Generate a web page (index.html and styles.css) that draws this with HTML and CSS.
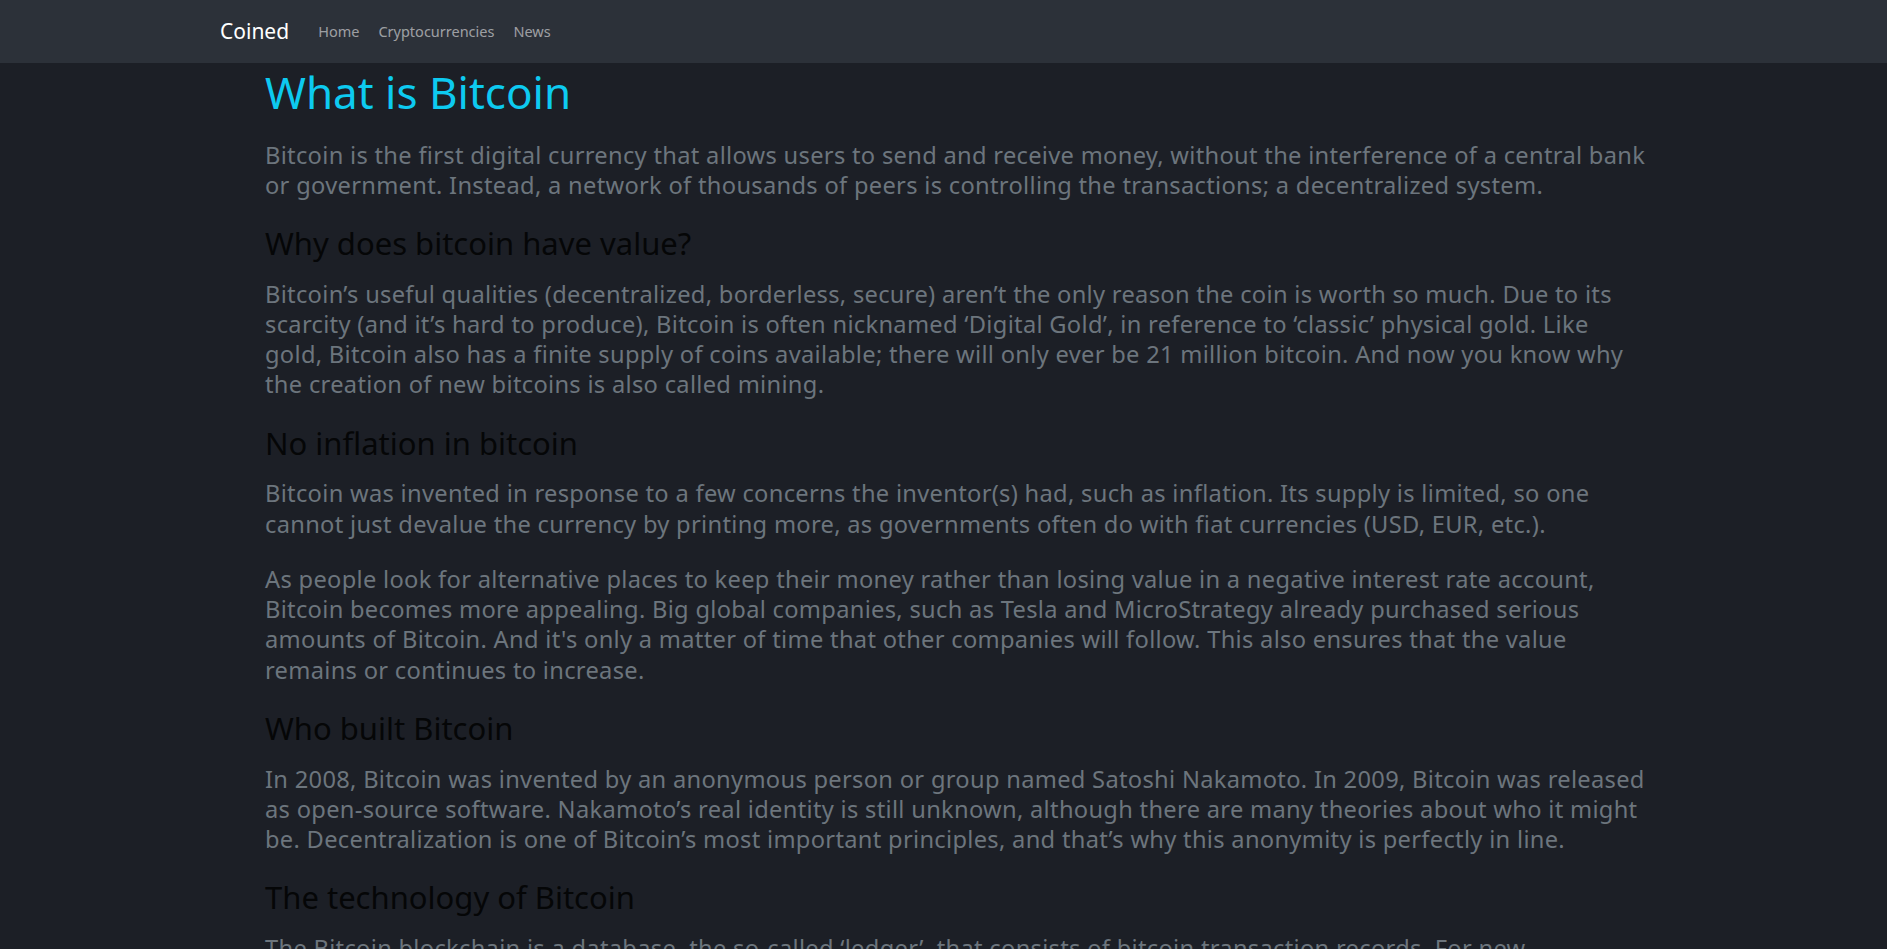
FILE: index.html
```html
<!DOCTYPE html>
<html lang="en">
<head>
<meta charset="utf-8">
<title>Coined - What is Bitcoin</title>
<link rel="stylesheet" href="styles.css">
</head>
<body>
<nav class="navbar">
  <a class="brand" href="#">Coined</a>
  <ul class="nav">
    <li><a class="nav-link" href="#">Home</a></li>
    <li><a class="nav-link" href="#">Cryptocurrencies</a></li>
    <li><a class="nav-link" href="#">News</a></li>
  </ul>
</nav>
<main class="article">
  <h1 class="title">What is Bitcoin</h1>
  <p class="lead">Bitcoin is the first digital currency that allows users to send and receive money, without the interference of a central bank or government. Instead, a network of thousands of peers is controlling the transactions; a decentralized system.</p>
  <h3 class="section">Why does bitcoin have value?</h3>
  <p class="lead">Bitcoin’s useful qualities (decentralized, borderless, secure) aren’t the only reason the coin is worth so much. Due to its scarcity (and it’s hard to produce), Bitcoin is often nicknamed ‘Digital Gold’, in reference to ‘classic’ physical gold. Like gold, Bitcoin also has a finite supply of coins available; there will only ever be 21 million bitcoin. And now you know why the creation of new bitcoins is also called mining.</p>
  <h3 class="section">No inflation in bitcoin</h3>
  <p class="lead">Bitcoin was invented in response to a few concerns the inventor(s) had, such as inflation. Its supply is limited, so one cannot just devalue the currency by printing more, as governments often do with fiat currencies (USD, EUR, etc.).</p>
  <p class="lead">As people look for alternative places to keep their money rather than losing value in a negative interest rate account, Bitcoin becomes more appealing. Big global companies, such as Tesla and MicroStrategy already purchased serious amounts of Bitcoin. And it's only a matter of time that other companies will follow. This also ensures that the value remains or continues to increase.</p>
  <h3 class="section">Who built Bitcoin</h3>
  <p class="lead">In 2008, Bitcoin was invented by an anonymous person or group named Satoshi Nakamoto. In 2009, Bitcoin was released as open-source software. Nakamoto’s real identity is still unknown, although there are many theories about who it might be. Decentralization is one of Bitcoin’s most important principles, and that’s why this anonymity is perfectly in line.</p>
  <h3 class="section">The technology of Bitcoin</h3>
  <p class="lead">The Bitcoin blockchain is a database, the so-called ‘ledger’, that consists of bitcoin transaction records. For new transactions to be added to the ledger, the nodes must agree that the transaction is real and valid.</p>
</main>
</body>
</html>
```
FILE: styles.css
```css
html, body {
  margin: 0;
  padding: 0;
}
body {
  background: #1c1f26;
  font-family: "Noto Sans", "Open Sans", sans-serif;
  overflow: hidden;
}
.navbar {
  height: 63px;
  background: #2c3139;
  display: flex;
  align-items: center;
  padding-left: 220px;
  box-sizing: border-box;
}
.brand {
  color: #fff;
  font-size: 21px;
  text-decoration: none;
  margin-right: 19.5px;
  line-height: 1;
}
.nav {
  display: flex;
  list-style: none;
  margin: 0;
  padding: 0;
}
.nav-link {
  display: block;
  padding: 0 9.5px;
  font-size: 14.5px;
  color: rgba(255, 255, 255, 0.55);
  text-decoration: none;
  line-height: 1;
}
.article {
  width: 1384px;
  padding: 3px 0 0 265px;
}
.title {
  margin: 0 0 21.5px;
  font-size: 44px;
  line-height: 52px;
  font-weight: 400;
  color: #0dcaf0;
}
.section {
  margin: 1px 0 16.5px;
  font-size: 31px;
  line-height: 37px;
  font-weight: 400;
  color: #050607;
}
.lead {
  margin: 0 0 25px;
  font-size: 23.68px;
  line-height: 30.3px;
  letter-spacing: 0.3px;
  font-weight: 400;
  color: #6c757d;
}
```
